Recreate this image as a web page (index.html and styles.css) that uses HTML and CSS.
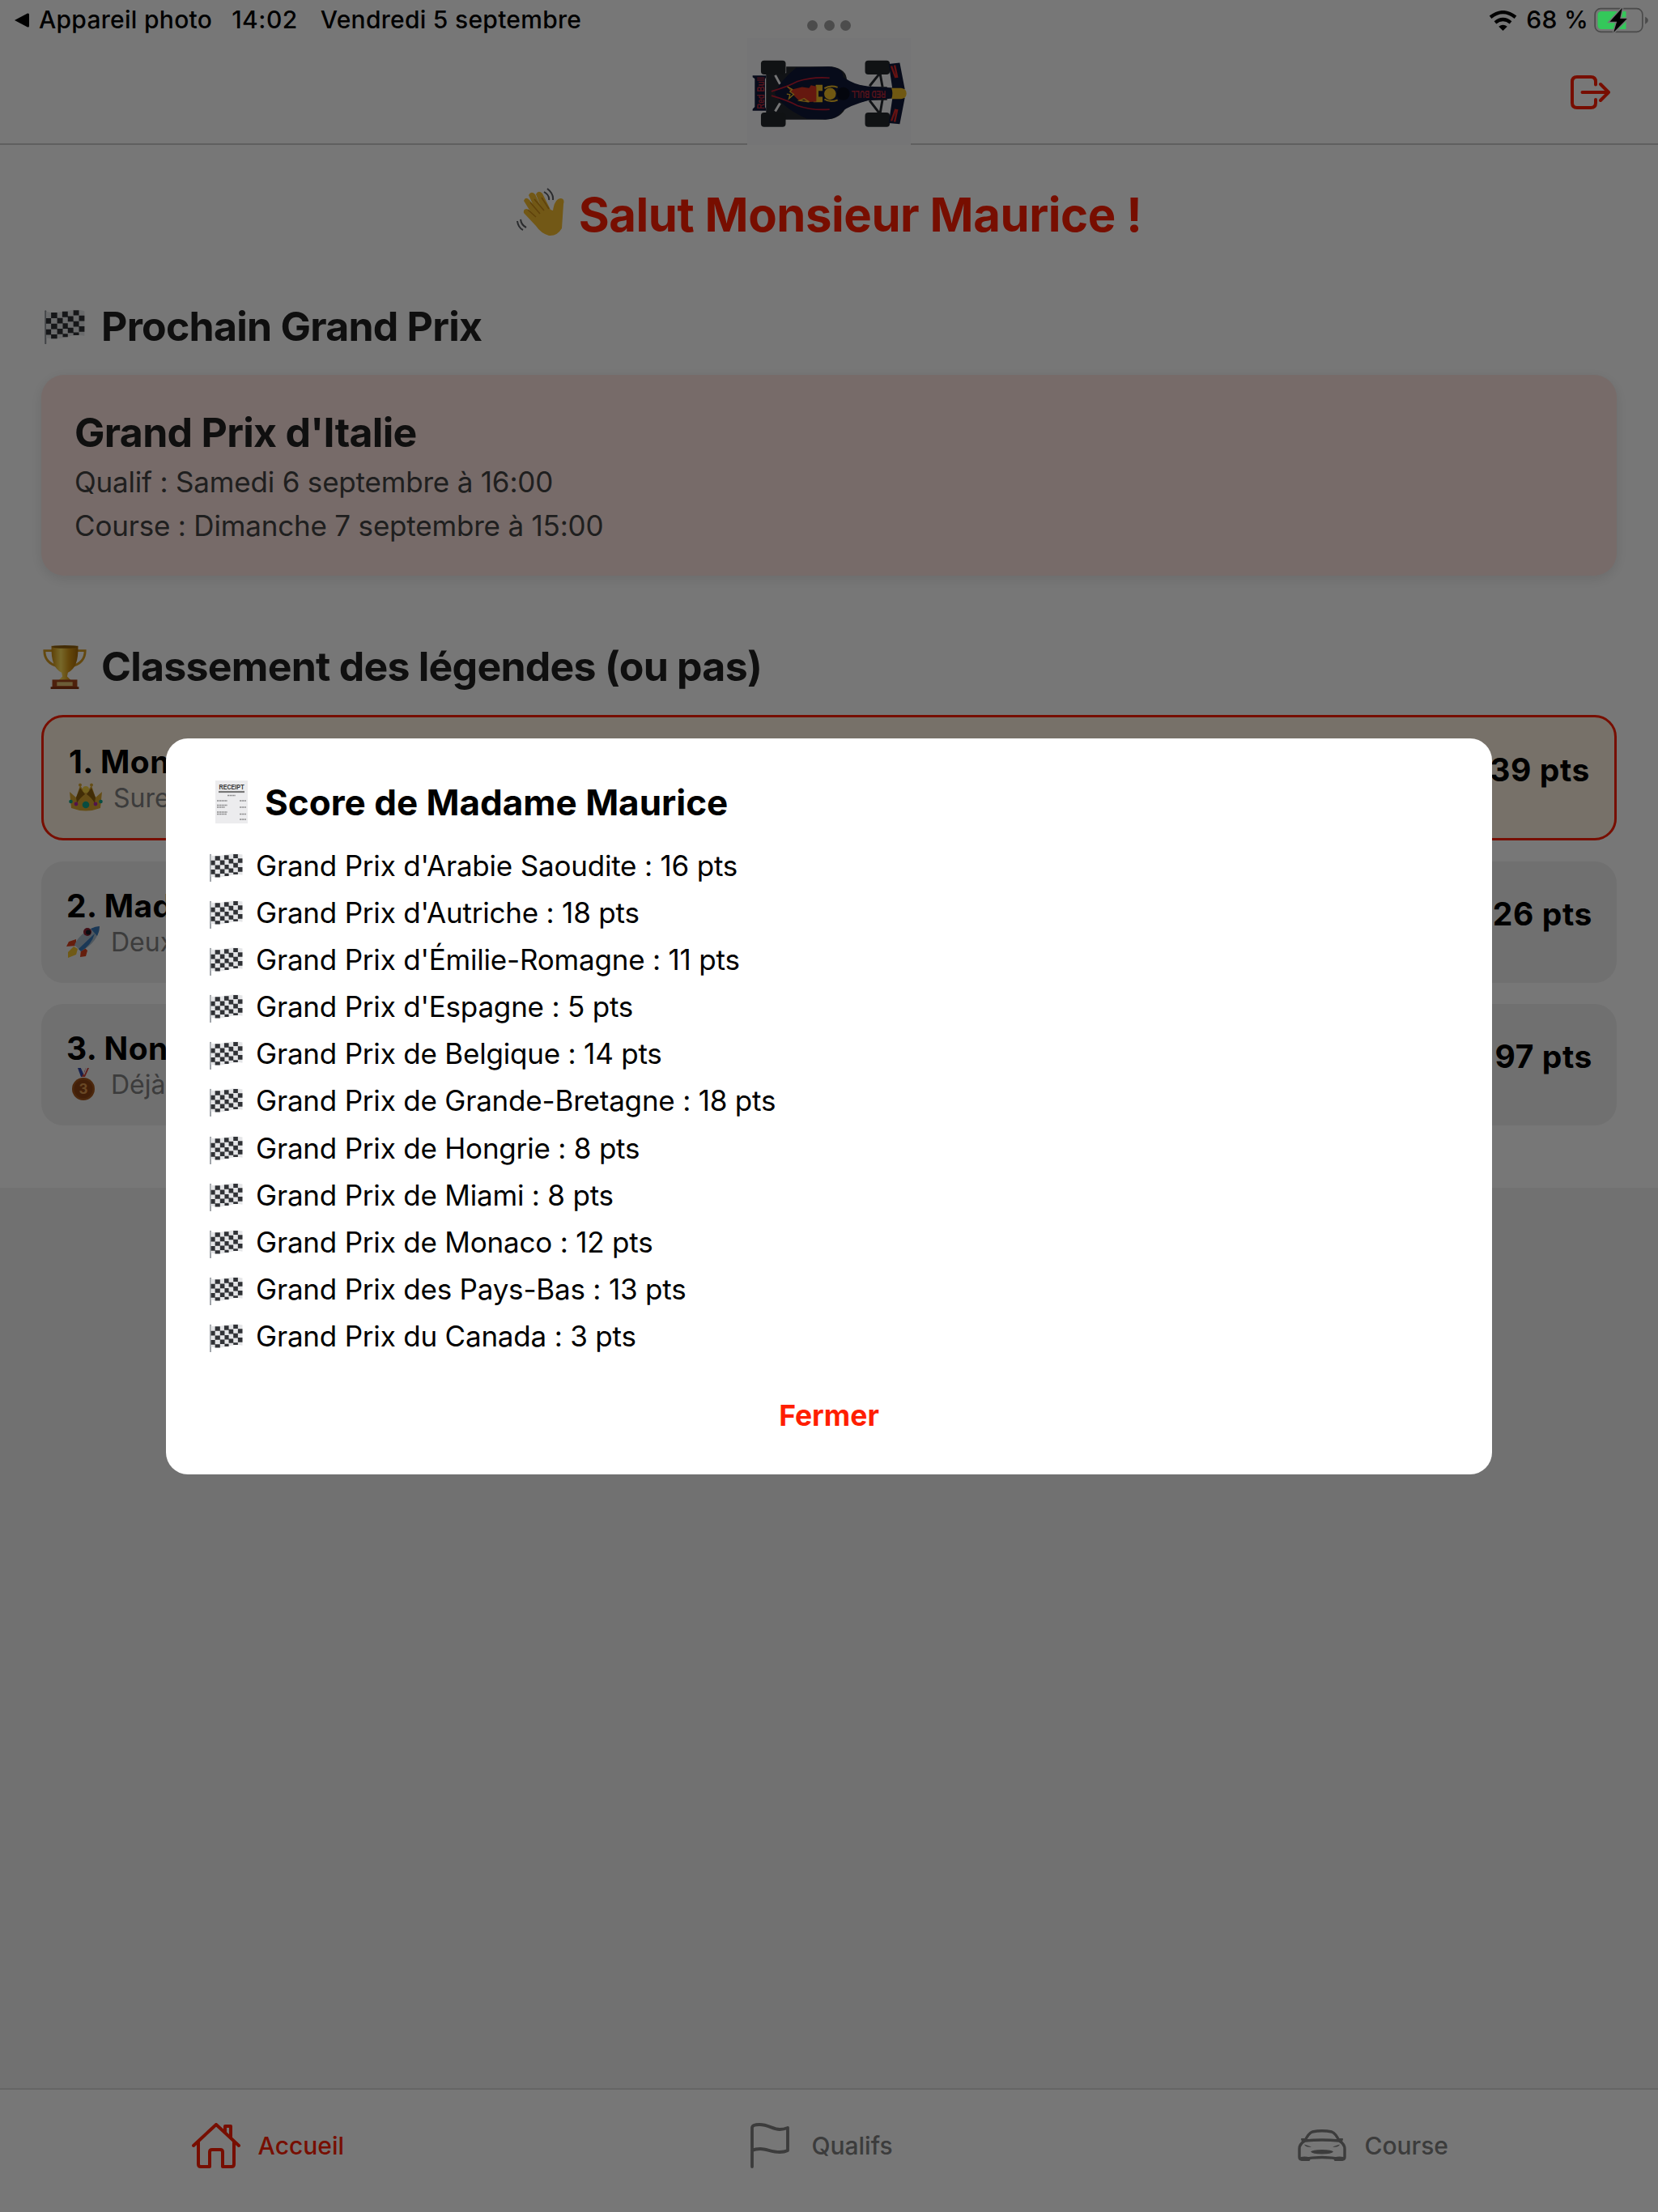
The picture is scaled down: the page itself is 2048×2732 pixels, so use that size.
FILE: index.html
```html
<!DOCTYPE html>
<html lang="fr">
<head>
<meta charset="utf-8">
<title>Accueil</title>
<link rel="stylesheet" href="styles.css">
</head>
<body>
<svg width="0" height="0" class="defs" aria-hidden="true">
  <defs>
    <linearGradient id="gold" x1="0" x2="1"><stop offset="0" stop-color="#c98a10"/><stop offset=".35" stop-color="#ffdf5a"/><stop offset=".65" stop-color="#d99a18"/><stop offset="1" stop-color="#a86a08"/></linearGradient>
    <symbol id="flag" viewBox="0 0 40 34">
      <path d="M1 1.5V33.500" stroke="#8b9096" stroke-width="1.6" stroke-linecap="round"/>
      <path d="M1.500 2C9 4 14 2.500 20 1.500S33 -.5 39.500 1.500V26C32 24.500 27 26 20 27.500S8 29 1.500 28Z" fill="#e4e5e7"/>
      <g fill="#303236">
        <path d="M6.500 3h6v5.500h-6zM17.500 2h5.500v5.500h-5.500zM28.500 .8h5.500v5h-5.500zM1.500 8.500h5V14h-5zM12.500 8.300H18v5.500h-5.500zM23 6.500h5.500V12H23zM34 6h5.500v5.300H34zM6.500 14h6v5.300h-6zM18 13.500h5V19h-5zM28.500 11.500H34V17h-5.500zM1.500 19.500h5V25h-5zM12.500 19H18v5.300h-5.500zM23 18h5.500v5.200H23zM34 16.500h5.500V22H34zM6.500 24.500h6v4.200h-6zM18 24h5v3.200h-5zM28.500 22.500H34v2.800h-5.500z"/>
      </g>
    </symbol>
  </defs>
</svg>

<div class="screen">
  <header class="header">
    <svg class="car" viewBox="68 140 608 400">
      <rect x="68" y="140" width="608" height="400" fill="#fafafc"/>
      <g fill="#262a30">
        <path d="M138 270h75v-24h170q60 10 55 60l80 15h70v50h-70l-80 20q-20 50-80 52H138Z"/>
      </g>
      <path d="M172 278l18 33M172 412l18-30" stroke="#fafafc" stroke-width="9"/>
      <path d="M170 345Q190 300 250 250L370 246Q425 250 425 285Q470 316 515 319L610 325V364L515 372Q450 390 420 412Q400 442 360 442L290 440Q200 400 170 345Z" fill="#101838"/>
      <path d="M523 318L560 272M571 322L562 272M523 372L560 420M571 368L562 420" stroke="#262a30" stroke-width="9"/>
      <g fill="#23272b"><rect x="119" y="223" width="92" height="52" rx="12"/><rect x="119" y="417" width="92" height="53" rx="12"/><rect x="506" y="223" width="92" height="52" rx="12"/><rect x="506" y="417" width="92" height="53" rx="12"/></g>
      <path d="M594 236L635 232L654 330H608ZM608 362H654L635 460L594 456Z" fill="#101838"/>
      <path d="M88 279h50v6l-4 8v103l4 8v6H88v-6l8-8V291l-8-6Z" fill="#101838"/>
      <path d="M604 244l16 44M616 241l10 46M604 448l16-44M616 451l10-46" stroke="#d82828" stroke-width="7"/>
      <path d="M604 326H640Q660 328 660 346T640 366H604Q612 346 604 326Z" fill="#f0bd28"/>
      <path d="M158 338Q215 322 255 301Q310 283 374 288M158 354Q215 370 255 391Q310 410 374 405" fill="none" stroke="#c41c34" stroke-width="5"/>
      <path d="M323 314h25v22h-15v22h15v20h-34Z" fill="#f0bd28"/>
      <path d="M217 321L238 330 272 322 298 326 305 315 325 320V376L290 378 278 368 262 374 238 350Z" fill="#d83420"/>
      <path d="M217 321l18 10-8 8 14 10-18 16 4-15-12-2M262 372l18-7 18 12Z" stroke="#f0bd28" stroke-width="4" fill="none"/>
      <circle cx="425" cy="347" r="24" fill="#0a0e1c"/>
      <circle cx="376" cy="347" r="22" fill="#f0bd28"/><path d="M355 327Q376 313 404 323M355 367Q376 381 404 370" stroke="#f0bd28" stroke-width="6" fill="none"/>
      <text class="car-text" x="0" y="0" transform="translate(583 334) rotate(180)" font-size="36" textLength="128" lengthAdjust="spacingAndGlyphs">RED BULL</text>
      <text class="car-text" x="0" y="0" transform="translate(130 404) rotate(-90)" font-size="37" textLength="120" lengthAdjust="spacingAndGlyphs">Red Bull</text>
    </svg>
    <svg class="logout" viewBox="0 0 50 44" fill="none" stroke="#ff1e00" stroke-width="4" stroke-linecap="round" stroke-linejoin="round"><path d="M32 12.500V9Q32 3 26 3H9Q3 3 3 9V35Q3 41 9 41H26Q32 41 32 35V31M15.500 22H48M38 12L48 22 38 32"/></svg>
  </header>

  <main class="content">
    <h1 class="hello"><svg class="e-wave" viewBox="0 0 60 60">
      <path d="M9 16Q11 10 16 15L20 20 15 9Q18 3 23 8L30 23 24 8Q27 2 32 7L42 27 45 28Q47 14 54 13 60 13 58 20L56 50Q50 60 40 59 30 56 24 47L9 31Q8 26 13 26L17 29Z" fill="#f5bd30"/>
      <path d="M17 18L29 32M22 14L34 28M31 12L40 26M14 27L24 36" stroke="#cb8d18" stroke-width="1.6" fill="none"/>
      <path d="M34 5Q41 9 40 15M38 1Q46 7 45 15M5 39Q6 46 12 49M1 41Q2 49 8 52" fill="none" stroke="#5a5c62" stroke-width="2"/>
    </svg><span>Salut Monsieur Maurice !</span></h1>

    <h2 class="section-title"><svg class="e-title"><use href="#flag" x="4" y="8" width="50" height="43"/></svg><span>Prochain Grand Prix</span></h2>
    <section class="next-gp">
      <h3 class="gp-name">Grand Prix d'Italie</h3>
      <p class="gp-date">Qualif : Samedi 6 septembre à 16:00</p>
      <p class="gp-date">Course : Dimanche 7 septembre à 15:00</p>
    </section>

    <h2 class="section-title ranking-title"><svg class="e-title" viewBox="0 0 60 60">
      <path d="M14 10H4Q4 26 22 30M46 10H56Q56 26 38 30" fill="none" stroke="#d59a22" stroke-width="3"/>
      <path d="M13 4H47Q48 32 34 38L33 43 39 49H21L27 43 26 38Q12 32 13 4Z" fill="url(#gold)"/><ellipse cx="30" cy="5" rx="17" ry="2" fill="#8f5f0c"/>
      <path d="M14 47H46V58H14Z" fill="#a8481c"/><path d="M20 50H40V55H20Z" fill="#e8c878"/><path d="M12 56H48V59H12Z" fill="#8a3410"/>
    </svg><span>Classement des légendes (ou pas)</span></h2>
    <ol class="ranking">
      <li class="player player--me">
        <div>
          <div class="player-name">1. Monsieur</div>
          <div class="player-note"><svg class="e-note" viewBox="0 0 42 36"><path d="M3 31L1 11 9 18 14 3 20 12 21 5 22 12 28 3 33 18 41 11 39 31Q21 38 3 31Z" fill="#d9a630"/><path d="M9 18L14 6 20 14Q14 18 10 25ZM33 18L28 6 22 14Q28 18 32 25Z" fill="#8e6010"/><circle cx="21" cy="8" r="4" fill="#f4d040"/><circle cx="14" cy="2.500" r="2" fill="#d9a630"/><circle cx="28" cy="2.500" r="2" fill="#d9a630"/><circle cx="21" cy="27" r="4.300" fill="#12a48a"/><circle cx="9" cy="26" r="2.400" fill="#b02ca0"/><circle cx="33" cy="26" r="2.400" fill="#b02ca0"/><circle cx="2.500" cy="23" r="2.300" fill="#12a48a"/><circle cx="39.500" cy="23" r="2.300" fill="#12a48a"/></svg>Sure</div>
        </div>
        <div class="player-points">139 pts</div>
      </li>
      <li class="player">
        <div>
          <div class="player-name">2. Madame</div>
          <div class="player-note"><svg class="e-note" viewBox="0 0 42 40"><path d="M12 17L3 20 0 26 12 25ZM22 27L26 31 24 38 17 39 18 30Z" fill="#d8401c"/><path d="M9 26L14 29 12 36 2 40 2 33Z" fill="#f0c030"/><path d="M10 24Q18 6 41 1 40 20 18 32Z" fill="#a9bccb"/><path d="M30 4Q36 1 41 1 41 7 38 13ZM15 29L35 10Q31 24 18 32Z" fill="#3878b8"/><circle cx="26" cy="8" r="5" fill="#8c2030"/><circle cx="27" cy="8.500" r="3" fill="#151b26"/></svg>Deux</div>
        </div>
        <div class="player-points">126 pts</div>
      </li>
      <li class="player">
        <div>
          <div class="player-name">3. Non</div>
          <div class="player-note"><svg class="e-note" viewBox="0 0 42 40"><path d="M14 0H18L23 11H18Z" fill="#3048a8"/><path d="M24 0H28L23 11H19Z" fill="#d04038"/><path d="M18 0H20L22 6 24 0H26L22 9Z" fill="#e8e8f0"/><circle cx="21" cy="26" r="14" fill="#a4561c"/><circle cx="21" cy="26" r="11.500" fill="#8e4414"/><text x="21" y="32" class="medal-text">3</text></svg>Déjà</div>
        </div>
        <div class="player-points">97 pts</div>
      </li>
    </ol>
  </main>

  <nav class="tabs">
    <a class="tab tab--active"><svg class="i-home" viewBox="0 0 60 56" fill="none" stroke="currentColor" stroke-width="4" stroke-linejoin="round" stroke-linecap="round"><path d="M2 28L30 2 58 28M8 23V51Q8 54 11 54H22V36Q22 33 25 33H35Q38 33 38 36V54H49Q52 54 52 51V23M41 12V4H48V18"/></svg>Accueil</a>
    <a class="tab tab--quali"><svg class="i-flag" viewBox="0 0 48 56" fill="none" stroke="currentColor" stroke-width="3.800" stroke-linejoin="round" stroke-linecap="round"><path d="M2 54V6Q2 2 11 2C22 2 28 8 36 8Q41 8 46 6V34Q42 36 36 36C26 36 20 32 12 32Q6 32 2 34"/></svg>Qualifs</a>
    <a class="tab"><svg class="i-car" viewBox="0 0 60 40" fill="none" stroke="currentColor" stroke-width="3.400" stroke-linejoin="round" stroke-linecap="round"><path d="M9 14Q13 5 18 3Q30 .5 42 3Q47 5 51 14M9 14Q30 12 51 14Q58 18 58 24V34Q58 37 55 37Q30 32 5 37Q2 37 2 34V24Q2 18 9 14Z"/><path d="M4 35Q9 34 15 35.500L14 38H5ZM56 35Q51 34 45 35.500L46 38H55ZM5 12H9L6 15ZM55 12H51L54 15Z" fill="currentColor" stroke-width="2"/><path d="M16 27.500Q18 25 30 25T44 27.500Q42 30.500 30 30.500T16 27.500ZM8 18.500L17 21.500Q11 22.500 9 20ZM52 18.500L43 21.500Q49 22.500 51 20Z" fill="currentColor" stroke="none"/></svg>Course</a>
  </nav>
</div>

<div class="overlay">
  <div class="modal" role="dialog">
    <h2 class="modal-title"><svg class="e-receipt" viewBox="0 0 42 54"><path d="M1 0H41V53H1Z" fill="#ececee"/><text x="21" y="11" class="receipt-text" textLength="31" lengthAdjust="spacingAndGlyphs">RECEIPT</text><path d="M5 14H37" stroke="#777" stroke-width="2.200"/><path d="M16 18.500H26M3 25H16M31 25H39M3 30.500H16M3 33H13M31 33H39M3 39H16M3 41.500H15M31 41.500H39M31 48H39" stroke="#8e8e90" stroke-width="1.500" stroke-dasharray="2.500 .6"/></svg>Score de Madame Maurice</h2>
    <ul class="scores">
      <li><svg><use href="#flag"/></svg><span>Grand Prix d'Arabie Saoudite : 16 pts</span></li>
      <li><svg><use href="#flag"/></svg><span>Grand Prix d'Autriche : 18 pts</span></li>
      <li><svg><use href="#flag"/></svg><span>Grand Prix d'Émilie-Romagne : 11 pts</span></li>
      <li><svg><use href="#flag"/></svg><span>Grand Prix d'Espagne : 5 pts</span></li>
      <li><svg><use href="#flag"/></svg><span>Grand Prix de Belgique : 14 pts</span></li>
      <li><svg><use href="#flag"/></svg><span>Grand Prix de Grande-Bretagne : 18 pts</span></li>
      <li><svg><use href="#flag"/></svg><span>Grand Prix de Hongrie : 8 pts</span></li>
      <li><svg><use href="#flag"/></svg><span>Grand Prix de Miami : 8 pts</span></li>
      <li><svg><use href="#flag"/></svg><span>Grand Prix de Monaco : 12 pts</span></li>
      <li><svg><use href="#flag"/></svg><span>Grand Prix des Pays-Bas : 13 pts</span></li>
      <li><svg><use href="#flag"/></svg><span>Grand Prix du Canada : 3 pts</span></li>
    </ul>
    <button class="close">Fermer</button>
  </div>
</div>

<div class="status">
  <svg class="back" viewBox="0 0 20 20"><path d="M1 10L17 1.500Q19 1 19 3V17Q19 19 17 18.500Z"/></svg>
  <span>Appareil photo</span><span class="st-time">14:02</span><span class="st-date">Vendredi 5 septembre</span>
  <span class="dots"><i></i><i></i><i></i></span>
  <svg class="wifi" viewBox="0 0 104 76"><g fill="none" stroke="#000" stroke-width="13"><path d="M5 25Q52 -12 99 25"/><path d="M23 45Q52 22 81 45"/></g><path d="M36 60Q52 48 68 60L52 76Z"/></svg>
  <span>68 %</span>
  <svg class="battery" viewBox="0 0 200 96"><rect x="3" y="5" width="176" height="86" rx="21" fill="none" stroke="#4a4a4a" stroke-width="5"/><path d="M27 15H118V81H27Q13 81 13 67V29Q13 15 27 15Z" fill="#34c85a"/><path d="M189 35Q200 40 200 48T189 62Z" fill="#4a4a4a"/><path d="M104 2L58 53H84L72 93 122 42H96Z" stroke="#777" stroke-width="9"/><path d="M104 2L58 53H84L72 93 122 42H96Z"/></svg>
</div>
</body>
</html>
```
FILE: styles.css
```css
* { box-sizing: border-box; margin: 0; padding: 0; }
body { width: 2048px; height: 2732px; overflow: hidden; font-family: Inter, "Liberation Sans", sans-serif; color: #000; background: #f2f2f2; }
.defs { position: absolute; }
svg { display: block; flex: none; }

.screen { height: 2732px; display: flex; flex-direction: column; }
.header { height: 179px; padding: 47px 59px 0; background: #fff; border-bottom: 2px solid #ccc; display: grid; grid-template-columns: 1fr 202px 1fr; align-items: start; }
.car { grid-column: 2; width: 202px; height: 133px; }
.car-text { font-family: "Liberation Sans", sans-serif; font-weight: 700; fill: #b82838; }
.logout { justify-self: end; width: 50px; height: 44px; margin-top: 45px; }

.content { height: 1288px; padding: 0 51px; background: #fff; }
.hello { margin-top: 50px; display: flex; justify-content: center; font-size: 58px; line-height: 72px; letter-spacing: -.43px; font-weight: 700; color: #ff1e00; white-space: nowrap; }
.e-wave { width: 60px; height: 60px; margin: 3px 17px 0 0; }
.section-title { margin-top: 72px; display: flex; font-size: 50px; line-height: 60px; letter-spacing: -.76px; font-weight: 700; color: #222; }
.e-title { width: 58px; height: 58px; margin: 1px 16px 0 0; }
.next-gp { height: 248px; margin-top: 30px; padding: 41px; border-radius: 28px; background: #ffe5e0; box-shadow: 0 4px 16px rgba(0, 0, 0, .1); }
.gp-name { font-size: 50px; line-height: 60px; letter-spacing: -.7px; font-weight: 700; margin-bottom: 5px; color: #222; }
.gp-date { font-size: 35px; line-height: 53.5px; letter-spacing: -.19px; color: #444; }
.ranking-title { margin-top: 82px; }
.ranking { list-style: none; margin-top: 30px; display: flex; flex-direction: column; gap: 25.500px; }
.player { height: 150.500px; padding: 32px 31px; border-radius: 27px; background: #f0f0f0; display: flex; justify-content: space-between; }
.player--me { height: 155px; border: 3px solid #ff1e00; background: #fff3e0; }
.player-name, .player-points { font-size: 39px; line-height: 46px; letter-spacing: .4px; font-weight: 700; white-space: nowrap; }
.player-points { margin: 10px -1px 0 0; letter-spacing: .6px; }
.player-note { margin-top: 1px; display: flex; font-size: 32px; line-height: 42px; color: #808080; }
.e-note { width: 42px; height: 40px; margin-right: 13px; }
.medal-text { font: 700 17px Inter, sans-serif; fill: #e09a50; text-anchor: middle; }

.tabs { height: 153px; margin-top: auto; background: #fff; border-top: 2px solid #d8d8d8; display: grid; grid-template-columns: repeat(3, 1fr); }
.tab { height: 138px; padding-right: 21px; display: flex; align-items: center; justify-content: center; font-size: 30px; font-weight: 500; color: #808080; }
.tab--quali { padding-right: 18px; }
.tab--active { color: #ff1e00; }
.i-home { width: 60px; height: 56px; margin-right: 22px; }
.i-flag { width: 48px; height: 56px; margin-right: 27px; }
.i-car { width: 60px; height: 40px; margin-right: 22px; }

.overlay { position: absolute; inset: 0; background: rgba(0, 0, 0, .533); display: flex; align-items: center; justify-content: center; }
.modal { width: 1638px; height: 909px; padding: 52px; border-radius: 27px; background: #fff; }
.modal-title { display: flex; font-size: 44px; line-height: 54px; font-weight: 700; white-space: nowrap; }
.e-receipt { width: 42px; height: 54px; margin: 0 20px 0 8px; }
.receipt-text { font: 700 8.500px "Liberation Sans", sans-serif; fill: #333; text-anchor: middle; }
.scores { list-style: none; margin-top: 22px; font-size: 35px; line-height: 58.200px; letter-spacing: -.2px; }
.scores li { height: 58.200px; display: flex; white-space: nowrap; }
.scores svg { width: 41px; height: 35px; margin: 14px 16px 0 2px; }
.close { width: 100%; margin-top: 44px; border: 0; background: none; font: 700 35.500px/50px Inter, sans-serif; color: #ff1e00; }

.status { position: absolute; inset: 0 0 auto; height: 49px; padding: 0 12px 0 17px; display: flex; align-items: center; font-size: 30px; line-height: 49px; letter-spacing: .28px; font-weight: 500; white-space: nowrap; }
.back { width: 20px; height: 20px; margin-right: 11px; }
.st-time { margin-left: 24px; letter-spacing: .5px; }
.st-date { margin-left: 28px; }
.dots { position: absolute; left: 997px; top: 25px; display: flex; gap: 7.500px; }
.dots i { width: 13px; height: 13px; border-radius: 50%; background: #4c4c4c; }
.wifi { width: 35px; height: 25px; margin: 1px 11px 0 auto; }
.battery { width: 67px; height: 32px; margin-left: 7px; }
```
